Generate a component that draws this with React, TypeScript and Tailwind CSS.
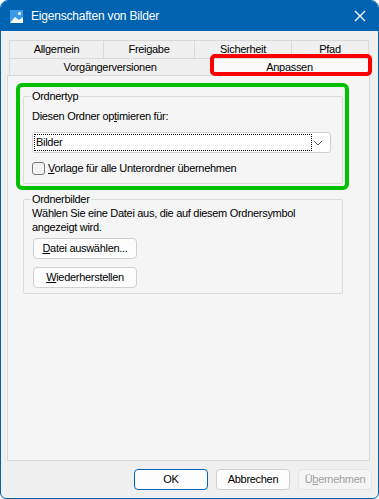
import React from 'react';

const font = { fontFamily: '"Liberation Sans", Arial, sans-serif' };

function Tab({ label, w, active }: { label: string; w: string; active?: boolean }) {
  return (
    <div
      className={`${w} h-full flex items-center justify-center border border-b-0 border-[#dadada] -ml-px first:ml-0 ${
        active ? 'bg-[#f9f9f9]' : 'bg-[#f0f0f0]'
      }`}
    >
      <span className="leading-none whitespace-nowrap">{label}</span>
    </div>
  );
}

function WinButton({
  children,
  w = 'w-[104px]',
  primary,
  disabled,
}: {
  children: React.ReactNode;
  w?: string;
  primary?: boolean;
  disabled?: boolean;
}) {
  return (
    <div
      className={`${w} h-[21px] shrink-0 flex items-center justify-center rounded-[4px] border whitespace-nowrap leading-none ${
        primary
          ? 'border-[#0067c0] bg-[#fdfdfd]'
          : disabled
          ? 'border-[#e5e5e5] bg-[#f5f5f5] text-[#a0a0a0]'
          : 'border-[#d0d0d0] bg-[#fdfdfd]'
      }`}
    >
      {children}
    </div>
  );
}

export default function App() {
  return (
    <div
      className="w-[379px] h-[499px] rounded-t-[8px] rounded-b-[6px] border border-[#0063b1] bg-[#f0f0f0] flex flex-col overflow-hidden text-[11px] tracking-[-0.3px] text-black"
      style={font}
    >
      {/* title bar */}
      <div className="h-[30px] bg-[#0063b1] flex items-center pl-[9px] pr-[12px] text-white shrink-0">
        <svg width="13" height="13" viewBox="0 0 13 13" className="mr-[8px]">
          <rect x="0" y="0" width="13" height="13" fill="#3a9ae8" />
          <path d="M0 13 L5 7 L9 10 L13 7 L13 13 Z" fill="#ffffff" />
          <circle cx="9.5" cy="3.5" r="1.5" fill="#ffffff" />
        </svg>
        <span className="text-[12px] tracking-[-0.2px]">Eigenschaften von Bilder</span>
        <svg width="12" height="12" viewBox="0 0 12 12" className="ml-auto">
          <path d="M1 1 L11 11 M11 1 L1 11" stroke="#ffffff" strokeWidth="1.2" />
        </svg>
      </div>

      {/* body */}
      <div className="flex-1 flex flex-col pt-[9px] relative">
        <div className="ml-[8px] w-[360px]">
          <div className="flex h-[18px]">
            <Tab label="Allgemein" w="w-[95px]" />
            <Tab label="Freigabe" w="w-[92px]" />
            <Tab label="Sicherheit" w="w-[98px]" />
            <Tab label="Pfad" w="w-[78px]" />
          </div>
          <div className="flex h-[17px]">
            <Tab label="Vorgängerversionen" w="w-[202px]" />
            <Tab label="Anpassen" w="w-[159px]" active />
          </div>
        </div>

        {/* panel */}
        <div className="ml-[6px] w-[363px] h-[386px] border border-[#dadada] bg-[#f5f5f5] pl-[15px] pt-[13px]">
          <fieldset className="w-[320px] h-[95px] border border-[#dcdcdc] rounded-[2px] px-[8px]">
            <legend className="px-[1px] -ml-[1px] leading-[14px]">Ordnertyp</legend>
            <div className="mt-[7px] leading-[12px] whitespace-nowrap">
              Diesen Ordner op<span className="underline">t</span>imieren für:
            </div>
            <div className="mt-[10px] w-[299px] h-[21px] bg-white border border-[#cfcfcf] rounded-[3px] flex items-center pl-[1px] pr-[7px]">
              <div className="w-[278px] h-[17px] border border-dotted border-black flex items-center pl-[1px] leading-none">
                Bilder
              </div>
              <svg width="10" height="6" viewBox="0 0 10 6" className="ml-auto">
                <path d="M1 1 L5 5 L9 1" fill="none" stroke="#5a5a5a" strokeWidth="1" />
              </svg>
            </div>
            <div className="mt-[9px] flex items-center gap-[3px] leading-none whitespace-nowrap">
              <div className="w-[13px] h-[13px] rounded-[3px] border border-[#7a7a7a] bg-[#f3f3f3]" />
              <span>
                <span className="underline">V</span>orlage für alle Unterordner übernehmen
              </span>
            </div>
          </fieldset>

          <fieldset className="mt-[8px] w-[320px] h-[102px] border border-[#dcdcdc] rounded-[2px] px-[8px]">
            <legend className="px-[1px] -ml-[1px] leading-[14px]">Ordnerbilder</legend>
            <div className="leading-[14px] whitespace-nowrap">
              Wählen Sie eine Datei aus, die auf diesem Ordnersymbol
              <br />
              angezeigt wird.
            </div>
            <div className="mt-[4px] flex flex-col gap-[8px] pl-[1px]">
              <WinButton>
                <span>
                  <span className="underline">D</span>atei auswählen...
                </span>
              </WinButton>
              <WinButton>
                <span>
                  <span className="underline">W</span>iederherstellen
                </span>
              </WinButton>
            </div>
          </fieldset>
        </div>

        {/* footer */}
        <div className="flex justify-end gap-[8px] pt-[8px] pr-[6px]">
          <WinButton w="w-[74px]" primary>
            OK
          </WinButton>
          <WinButton w="w-[74px]">Abbrechen</WinButton>
          <WinButton w="w-[74px]" disabled>
            <span>
              Ü<span className="underline">b</span>ernehmen
            </span>
          </WinButton>
        </div>

        {/* annotation overlays */}
        <div className="absolute left-[209px] top-[23px] w-[162px] h-[22px] border-[4px] border-[#ff0000] rounded-[5px]" />
        <div className="absolute left-[15px] top-[52px] w-[333px] h-[107px] border-[4px] border-[#00c000] rounded-[6px]" />
      </div>
    </div>
  );
}
